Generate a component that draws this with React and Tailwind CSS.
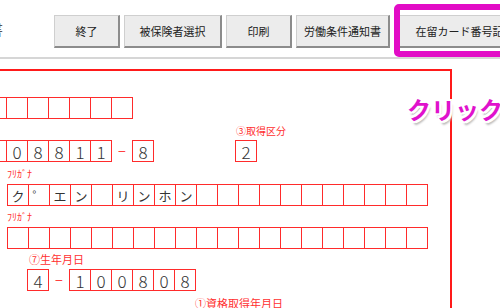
const jp = { fontFamily: '"Noto Sans CJK JP", "Noto Sans", sans-serif' }

const buttons = [
  { label: '終了', w: 'w-[66px]' },
  { label: '被保険者選択', w: 'w-[98px]' },
  { label: '印刷', w: 'w-[66px]' },
  { label: '労働条件通知書', w: 'w-[94px]' },
  { label: '在留カード番号記入', w: 'w-[143px]' },
]

function Cells({ chars, size = 'text-[17px] font-light' }) {
  return (
    <div className="flex shrink-0 border-r border-[#ff2b2b]">
      {chars.map((c, i) => (
        <div key={i} className={`w-[21px] h-[22px] border-y border-l border-[#ff2b2b] flex items-center justify-center leading-none text-[#333] ${size}`}>
          {c}
        </div>
      ))}
    </div>
  )
}

function Label({ children, className = '' }) {
  return <div className={`h-[12px] text-[10px] leading-[12px] text-[#ff3030] whitespace-nowrap ${className}`}>{children}</div>
}

function Dash() {
  return <div className="w-[20px] h-[22px] shrink-0 flex items-center justify-center text-[14px] leading-none text-[#ff4040]">−</div>
}

export default function App() {
  const kana = ['ク', '゜', 'エ', 'ン', '', 'リ', 'ン', 'ホ', 'ン', '', '', '', '', '', '', '', '', '', '', '']
  return (
    <div className="relative w-[500px] h-[308px] overflow-hidden bg-white" style={jp}>
      <div className="h-[57px] flex items-start">
        <div className="w-[54px] shrink-0 pt-[21px] overflow-hidden">
          <span className="block -ml-[13px] text-[16px] leading-none text-[#555]">書</span>
        </div>
        <div className="flex shrink-0 gap-[4px] pt-[15px]">
          {buttons.map((b) => (
            <div key={b.label} className={`${b.w} shrink-0 h-[33px] flex items-center justify-center bg-[#ececec] border border-[#cfcfcf] border-r-2 border-b-2 border-r-[#8c8c8c] border-b-[#8c8c8c] text-[11px] text-[#222] whitespace-nowrap`}>
              {b.label}
            </div>
          ))}
        </div>
      </div>
      <div className="h-[2px] bg-[#d6d6d6]" />

      <div className="mt-[10px] -ml-[20px] w-[472px] h-[260px] border-t-2 border-r-2 border-[#ff1a1a]">
        <div className="pt-[26px] pl-[5px] flex">
          <Cells chars={['', '', '', '', '', '', '']} />
        </div>

        <div className="mt-[6px] pl-[5px] flex items-end">
          <Cells chars={['', '0', '8', '8', '1', '1']} />
          <Dash />
          <Cells chars={['8']} />
          <div className="ml-[81px] flex flex-col">
            <Label className="ml-[1px] mb-[3px]">③取得区分</Label>
            <div className="w-[22px] h-[22px] border border-[#ff2b2b] flex items-center justify-center text-[17px] leading-none text-[#333] font-light">2</div>
          </div>
        </div>

        <div className="mt-[6px] pl-[27px]">
          <Label className="mb-[4px]">ﾌﾘｶﾞﾅ</Label>
          <div className="flex">
            <Cells chars={kana} size="text-[13px]" />
          </div>
        </div>

        <div className="mt-[5px] pl-[27px]">
          <Label className="mb-[4px]">ﾌﾘｶﾞﾅ</Label>
          <div className="flex">
            <Cells chars={Array(20).fill('')} />
          </div>
        </div>

        <div className="mt-[4px] pl-[47px]">
          <Label className="ml-[2px] mb-[4px] text-[11px]">⑦生年月日</Label>
          <div className="flex">
            <Cells chars={['4']} />
            <Dash />
            <Cells chars={['1', '0', '0', '8', '0', '8']} />
          </div>
        </div>

        <div className="mt-[6px] pl-[215px]">
          <Label className="text-[11px]">①資格取得年月日</Label>
        </div>
      </div>

      <div className="absolute left-[394px] top-[4px] w-[120px] h-[53px] border-[6px] border-[#e20cc6] rounded-[5px]" />
      <div className="absolute left-[407px] top-[97px] text-[24px] font-bold leading-none text-[#e012cc] whitespace-nowrap [text-shadow:-2px_-2px_0_#fff,2px_-2px_0_#fff,-2px_2px_0_#fff,2px_2px_0_#fff,0_-2px_0_#fff,0_2px_0_#fff,-2px_0_0_#fff,2px_0_0_#fff,2px_4px_2px_#bbb]">
        クリック
      </div>
    </div>
  )
}
